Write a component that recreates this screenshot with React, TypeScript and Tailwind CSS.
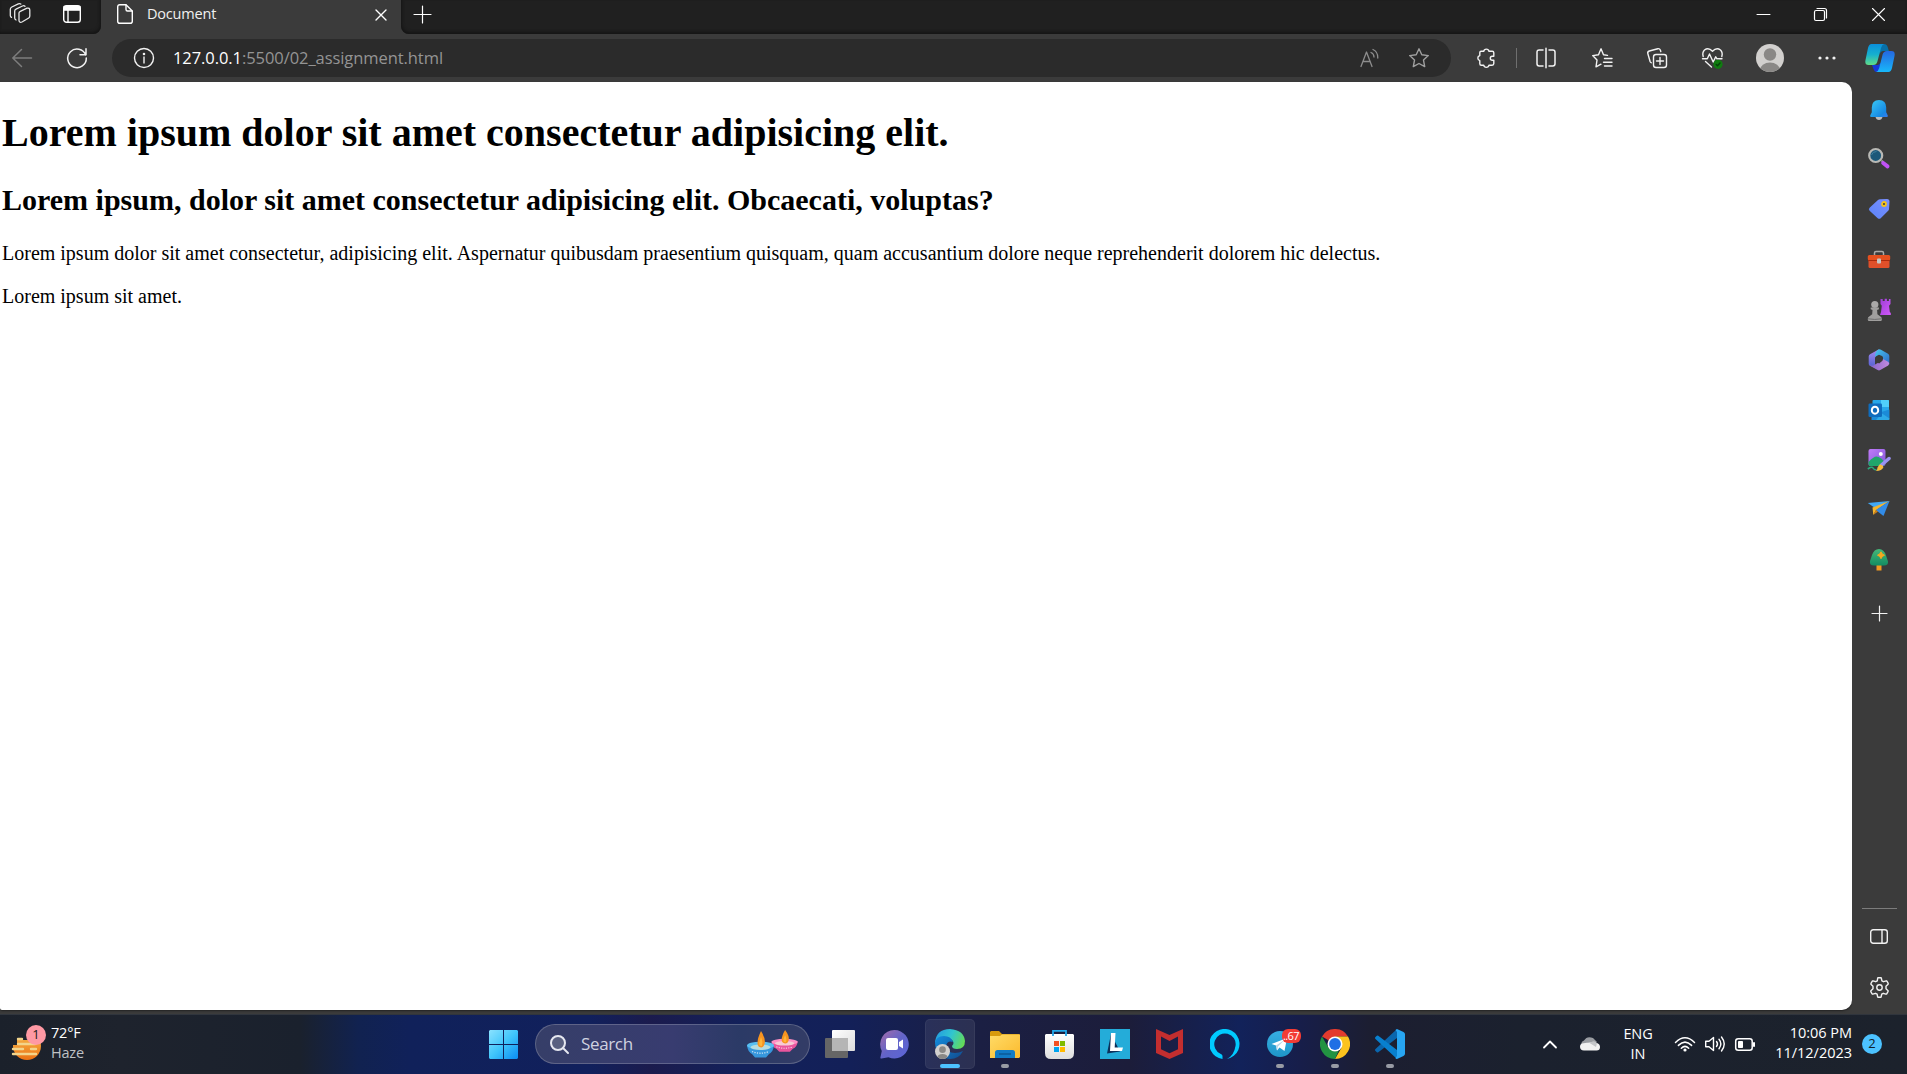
import React from 'react';

type IconProps = { w: number; h: number; className?: string; sw?: number; children: React.ReactNode };

/* Line icon drawn on a one-unit-per-pixel canvas. */
function Icon({ w, h, className = '', sw = 1.35, children }: IconProps) {
  return (
    <svg
      width={w}
      height={h}
      viewBox={`0 0 ${w} ${h}`}
      className={`shrink-0 overflow-visible ${className}`}
      fill="none"
      stroke="currentColor"
      strokeWidth={sw}
      strokeLinecap="round"
      strokeLinejoin="round"
    >
      {children}
    </svg>
  );
}

function Cell({ className, children }: { className: string; children?: React.ReactNode }) {
  return <div className={`flex shrink-0 items-center justify-center ${className}`}>{children}</div>;
}

function TabStrip() {
  return (
    <header className="flex h-[34px] shrink-0 bg-[#3b3b3b] text-white">
      <div className="flex w-[101px] shrink-0 rounded-br-lg bg-[#202020] pb-[6px] shadow-[inset_-1px_-2px_3px_#151515]">
        <Cell className="w-[39px]">
          <Icon w={22} h={22} sw={1.3} className="text-[#e8e8e8]">
            <path d="M11.300 8.300 18 5.200Q20.800 4.500 20.800 7.300V13q0 1.300-1.100 2l-6.300 3.700Q11 20 10.300 18.500 10 18 10 17V10q0-1.200 1.300-1.700Z" />
            <path d="M16 3.300Q15 2.300 13.500 3L7 6.200Q5.700 6.800 5.700 8.200V15q0 1.500 1.300 2" />
            <path d="M11.800 1Q10.800.2 9.300.8L2.800 4Q1.300 4.700 1.300 6.200v6.300q0 1.300 1.200 1.900" />
          </Icon>
        </Cell>
        <Cell className="ml-[12px] w-[42px]">
          <Icon w={18} h={18} sw={1.4}>
            <rect x=".7" y=".7" width="16.600" height="16.600" rx="2.800" />
            <path d="M1 1.500h16v3.600H1Z" fill="currentColor" />
            <path d="M5 5v12" />
          </Icon>
        </Cell>
      </div>
      <div className="flex w-[300px] shrink-0 items-center pb-[6px] pl-[16px]">
        <Icon w={16} h={20} sw={1.4}>
          <path d="M2.800.7H9L15.300 7v10.200q0 2.100-2.100 2.100H2.800Q.7 19.300.7 17.200V2.800Q.7.7 2.800.7Z" />
          <path d="M9 1v4.500Q9 7 10.500 7H15" />
        </Icon>
        <span className="ml-[14px] flex-1 font-['Open_Sans','Noto_Sans',sans-serif] text-[14.500px] leading-5 tracking-[-0.200px] text-[#f0f0f0]">
          Document
        </span>
        <Icon w={10} h={10} sw={1.4} className="mr-[15px] mt-[2px]">
          <path d="m0 0 10 10M10 0 0 10" />
        </Icon>
      </div>
      <div className="flex flex-1 rounded-bl-lg bg-[#202020] pb-[6px] shadow-[inset_1px_-2px_3px_#151515]">
        <Cell className="w-[43px]">
          <Icon w={17} h={17} sw={1.2}>
            <path d="M0 8.500h17M8.500 0v17" />
          </Icon>
        </Cell>
        <div className="flex-1" />
        <Cell className="w-[57px]">
          <Icon w={13} h={11} sw={1}>
            <path d="M0 5.500h13" />
          </Icon>
        </Cell>
        <Cell className="w-[57px]">
          <Icon w={13} h={13} sw={1.2}>
            <rect x=".5" y="2.500" width="10" height="10" rx="1.500" />
            <path d="M3 .5h7.500q2 0 2 2V10" />
          </Icon>
        </Cell>
        <Cell className="w-[58px]">
          <Icon w={13} h={13} sw={1.1}>
            <path d="m.5.5 12 12M12.500.5l-12 12" />
          </Icon>
        </Cell>
      </div>
    </header>
  );
}

function Copilot() {
  return (
    <svg width="30" height="30" viewBox="0 0 30 30" className="shrink-0">
      <defs>
        <linearGradient id="cpA" x1="0" y1="0" x2="0" y2="1">
          <stop offset="0" stopColor="#0a8fdc" />
          <stop offset=".5" stopColor="#16b0cf" />
          <stop offset="1" stopColor="#60dc88" />
        </linearGradient>
        <linearGradient id="cpB" x1="0" y1="0" x2="0" y2="1">
          <stop offset="0" stopColor="#2567e0" />
          <stop offset="1" stopColor="#18b8fa" />
        </linearGradient>
      </defs>
      <path d="M15 1h4q2.800 0 3.700 3l1.200 4h-5.500q-3 0-4 4Z" fill="#0870a8" />
      <path d="M7 22h6l4-3-2 10h-3q-2.500 0-3.300-2.500Z" fill="#1737d8" />
      <path d="M6.500 1H19q-2 .5-3 4l-3.600 13.500Q11.500 22 8 22H3.500Q-.5 22 .5 17L3 5Q4 1 6.500 1Z" fill="url(#cpA)" />
      <path d="M23.500 29H11q2.200-.5 3.200-4l3.400-13.500Q18.600 8 22 8h4.500q4 0 3 5L27 25q-1 4-3.500 4Z" fill="url(#cpB)" />
    </svg>
  );
}

function Person({ size }: { size: number }) {
  return (
    <svg width={size} height={size} viewBox="0 0 28 28" className="shrink-0">
      <defs>
        <clipPath id="face">
          <circle cx="14" cy="14" r="14" />
        </clipPath>
      </defs>
      <g clipPath="url(#face)">
        <path fill="#d2d0ce" d="M0 0h28v28H0Z" />
        <circle cx="14" cy="10.500" r="6.200" fill="#8a8886" />
        <ellipse cx="14" cy="26" rx="10" ry="7.500" fill="#8a8886" />
      </g>
    </svg>
  );
}

function Toolbar() {
  return (
    <div className="flex h-[48px] shrink-0 items-center bg-[#3b3b3b] text-[#f2f2f2]">
      <Cell className="w-[44px] text-[#7d7d7d]">
        <Icon w={20} h={18} sw={1.5}>
          <path d="M9.500.5.800 9l8.700 8.500M1 9h18.500" />
        </Icon>
      </Cell>
      <Cell className="w-[66px]">
        <Icon w={20} h={20} sw={1.5}>
          <path d="M18.700 7A9.300 9.300 0 1 0 19.300 10M19 .8v6h-6" />
        </Icon>
      </Cell>
      <div className="ml-[2px] flex h-[38px] w-[1339px] shrink-0 items-center rounded-full bg-[#2b2b2b]">
        <Cell className="ml-[12px] w-[40px]">
          <Icon w={20} h={20} sw={1.4}>
            <circle cx="10" cy="10" r="9.500" />
            <path d="M10 9v6" />
            <circle cx="10" cy="6" r=".6" fill="currentColor" />
          </Icon>
        </Cell>
        <span className="ml-[9px] flex-1 whitespace-nowrap font-['Open_Sans','Noto_Sans',sans-serif] text-[16.500px] tracking-[-0.070px] text-[#949494]">
          <span className="text-white">127.0.0.1</span>:5500/02_assignment.html
        </span>
        <Cell className="w-[49px] text-[#8d8d8d]">
          <Icon w={20} h={18} sw={1.3}>
            <path d="M1 17.500 6.500 3 12 17.500M3 12.500h7.200M11 3.500q3 1.300 3 4.500M13 .5q5 2.200 4.800 8.500" />
          </Icon>
        </Cell>
        <Cell className="mr-[7px] w-[50px] text-[#a0a0a0]">
          <Icon w={20} h={20} sw={1.4}>
            <path d="m10 .8 2.800 6 6.500.8-4.800 4.500 1.200 6.500-5.700-3.100-5.700 3.100 1.200-6.500L.7 7.600l6.500-.8Z" />
          </Icon>
        </Cell>
      </div>
      <Cell className="ml-[7px] w-[56px]">
        <Icon w={18} h={20} sw={1.4}>
          <path d="M4 3.300h2.700a2.700 2.700 0 0 1 5.300 0h3.300q1.500 0 1.500 1.500v3.400h-1.500a2 2 0 0 0 0 4h1.500v3.300q0 1.700-1.700 1.700H12a2.700 2.700 0 0 1-5.300 0H4.300q-1.500 0-1.500-1.500v-3a2.700 2.700 0 0 1 0-5.200V4.600q0-1.300 1.300-1.300Z" />
        </Icon>
      </Cell>
      <div className="ml-[2px] h-[20px] w-[1px] shrink-0 bg-[#6f6f6f]" />
      <Cell className="w-[58px]">
        <Icon w={20} h={20} sw={1.5}>
          <path d="M7 2H3.200Q1 2 1 4.200v11.600Q1 18 3.200 18H7M13 2h3.800Q19 2 19 4.200v11.600q0 2.200-2.200 2.200H13M10 .3v19.400" />
        </Icon>
      </Cell>
      <Cell className="w-[54px]">
        <Icon w={20} h={20} sw={1.4}>
          <path d="m15.500 7.400-4-.6L9 .8l-2.500 6L.7 7.600 5 12.100l-1 6.700 5-2.600M12.500 10.500H20M11.500 14.300H20M12.500 18H20" />
        </Icon>
      </Cell>
      <Cell className="w-[56px]">
        <Icon w={20} h={20} sw={1.4}>
          <rect x="6.500" y="6.500" width="13" height="13" rx="2.500" />
          <path d="M13 9.500v7M9.500 13h7M13.800 3.500 13.300 2q-.7-1.700-2.500-1.300L2.300 3Q.3 3.700.8 5.500l2.300 8q.4 1 1.100 1.200" />
        </Icon>
      </Cell>
      <Cell className="w-[55px]">
        <Icon w={21} h={20} sw={1.4}>
          <path d="M1.200 8.500Q0 4.500 2.500 2 6.500-1 10.500 3.300 14.500-1 18.500 2q2.500 2.500 1.300 6.500M.5 10.800h4.800L7.500 6l3.700 8 2.500-5.200 1.300 2H20M3.500 13.500 9.500 19" />
          <circle cx="16" cy="16.300" r="4.600" fill="#107c10" stroke="none" />
          <path d="m14.200 16.400 1.300 1.300 2.500-2.600" stroke="#07430a" />
        </Icon>
      </Cell>
      <Cell className="w-[60px]">
        <Person size={28} />
      </Cell>
      <Cell className="w-[54px]">
        <Icon w={18} h={4}>
          <g fill="currentColor" stroke="none">
            <circle cx="2" cy="2" r="1.600" />
            <circle cx="9" cy="2" r="1.600" />
            <circle cx="16" cy="2" r="1.600" />
          </g>
        </Icon>
      </Cell>
      <Cell className="w-[52px]">
        <Copilot />
      </Cell>
    </div>
  );
}

function Art({ w = 24, h = 24, children }: { w?: number; h?: number; children: React.ReactNode }) {
  return (
    <svg width={w} height={h} viewBox={`0 0 ${w} ${h}`} className="shrink-0">
      {children}
    </svg>
  );
}

function Sidebar() {
  return (
    <aside className="flex w-[55px] shrink-0 flex-col items-center bg-[#3b3b3b] pt-[3px] pr-px text-[#f2f2f2]">
      <Cell className="h-[50px]">
        <Art>
          <defs>
            <linearGradient id="bell" x1="0" y1="0" x2="1" y2="1">
              <stop offset="0" stopColor="#3ccbf4" />
              <stop offset=".75" stopColor="#1689e4" />
              <stop offset="1" stopColor="#3a7af0" />
            </linearGradient>
          </defs>
          <path d="M8.500 19h7q-.8 3-3.500 3t-3.500-3Z" fill="#bdbdbd" />
          <path d="M12 2q7.200.3 7.200 7.500v4.800l1.600 3.200q.3 1.500-1 1.500H4.200q-1.300 0-1-1.500l1.600-3.200V9.500Q4.800 2.300 12 2Z" fill="url(#bell)" />
        </Art>
      </Cell>
      <Cell className="h-[48px] pb-[2px]">
        <Art>
          <path d="m14.500 14.500 2 1.800" stroke="#999" strokeWidth="2" />
          <path d="m16.200 17 4.300 3.300" stroke="#c052f5" strokeWidth="4" strokeLinecap="round" />
          <circle cx="8.700" cy="9.500" r="6.500" fill="#1c5879" stroke="#b9b9b5" strokeWidth="2.200" />
          <path d="M4.500 9q1-3.500 5-3.500" stroke="#40809e" fill="none" />
        </Art>
      </Cell>
      <Cell className="h-[52px]">
        <Art>
          <defs>
            <linearGradient id="tag" x1="0" y1="1" x2="1" y2="0">
              <stop offset="0" stopColor="#5b83f8" />
              <stop offset="1" stopColor="#7a90ff" />
            </linearGradient>
          </defs>
          <path d="M13 2.200 20 2q2.500 0 2.500 2.500L22 12q0 1-.8 1.700l-7.500 7.500q-1.400 1.300-3 0L2.600 13.800q-1.500-1.600 0-3L11 3Q11.800 2.200 13 2.200Z" fill="url(#tag)" />
          <circle cx="17" cy="7" r="2" fill="#424242" stroke="#f5c21a" strokeWidth="1.800" />
        </Art>
      </Cell>
      <Cell className="h-[50px]">
        <Art>
          <path d="M7.500 8V5q0-1.500 1.500-1.500h6q1.500 0 1.500 1.500v3" stroke="#aaa9a7" strokeWidth="1.500" fill="none" />
          <rect x="1.500" y="11" width="21" height="9" rx="1.500" fill="#e0502a" />
          <rect x=".8" y="7" width="22.400" height="5.500" rx="1.500" fill="#e5501f" />
          <path d="M1 12.500h22" stroke="#a92b0d" />
          <rect x="10" y="10.500" width="4" height="5" rx="1" fill="#c5c5c3" />
        </Art>
      </Cell>
      <Cell className="h-[50px] pb-px">
        <Art>
          <defs>
            <linearGradient id="rook" x1="0" y1="0" x2="1" y2="1">
              <stop offset="0" stopColor="#9d3fd6" />
              <stop offset="1" stopColor="#d158fa" />
            </linearGradient>
          </defs>
          <path d="M13.500 1h2.200v2h2V.8h2.200V3h2V1h1.600v5l-1.500 1.800.8 6.200 1 1v2H13l1-3 .8-6.200L13.500 6Z" fill="url(#rook)" />
          <circle cx="7.800" cy="6.500" r="3.600" fill="#aaa9a8" />
          <path d="M3.700 9.500h8.200v1.700l-1.800.7.300 4.300 4 3q1.300 3.700-.8 3.800H2Q0 22.500 1.200 19.200l4-3 .3-4.300-1.800-.7Z" fill="#a09f9e" />
          <path d="M1 20.800q6.500 1.300 13.500 0" stroke="#6f6f6f" fill="none" />
        </Art>
      </Cell>
      <Cell className="h-[50px] pb-px">
        <Art>
          <defs>
            <linearGradient id="mA" x1="0" y1="0" x2="0" y2="1">
              <stop offset="0" stopColor="#a78af0" />
              <stop offset="1" stopColor="#4f5fd0" />
            </linearGradient>
            <linearGradient id="mB" x1="0" y1="0" x2="1" y2="1">
              <stop offset="0" stopColor="#45c8ee" />
              <stop offset="1" stopColor="#3068c8" />
            </linearGradient>
            <linearGradient id="mC" x1="0" y1="0" x2="1" y2="0">
              <stop offset="0" stopColor="#8563c8" />
              <stop offset="1" stopColor="#c28ae0" />
            </linearGradient>
          </defs>
          <path d="M12 1.200 3 6.300Q1.700 7 1.700 8.600v7.200q0 1 .9 1.600L8 20v-9.700q0-1.600 1.300-2.300Z" fill="url(#mA)" />
          <path d="M11 1.700q1.500-.8 3 0l7 4q1.300.8 1.300 2.300v8.500L16 13V9.500q0-1-1-1.500l-3-1.200-4 2Q8 4 11 1.700Z" fill="url(#mB)" />
          <path d="M2 16.800q3.500 2.200 6-.3l7.300-4 .7-1.500 5.500 3q1.700 1.700-.3 3.500L13.300 22q-1.300.8-2.700 0L3 17.800Z" fill="url(#mC)" />
          <path d="m8.700 9.200 3.500-1.700 3.200 2v3.300l-3.300 2.700-3.400-2.300Z" fill="#3b3b3b" />
        </Art>
      </Cell>
      <Cell className="h-[50px]">
        <Art>
          <rect x="5.500" y="2" width="16.500" height="15" rx="1" fill="#28a8ea" />
          <path d="M14 2h7q1 0 1 1v6h-8Z" fill="#50d0fa" />
          <path d="M5.500 9H14v6H5.500Z" fill="#0964b3" />
          <path d="M22.500 11.500V21q0 1-1 1h-17v-5Z" fill="#1b8bd8" />
          <path d="m15 15.500 7.500 5V21q0 1-1 1H9Z" fill="#3ac0f2" opacity=".6" />
          <rect x="1.500" y="5.500" width="13.500" height="13.500" rx="1.300" fill="#0f6cbd" />
          <ellipse cx="8" cy="12.200" rx="3.200" ry="3.500" stroke="white" strokeWidth="2" fill="none" />
        </Art>
      </Cell>
      <Cell className="h-[49px]">
        <Art>
          <defs>
            <linearGradient id="pic" x1="0" y1="0" x2="1" y2="1">
              <stop offset="0" stopColor="#c07bf8" />
              <stop offset="1" stopColor="#8357dc" />
            </linearGradient>
          </defs>
          <rect x="1.500" y="1" width="17" height="17" rx="2" fill="url(#pic)" />
          <path d="M1.500 14q5-5.500 8-5.500 4 0 9 6.500l-2 3H3.500q-2 0-2-2Z" fill="#21a56b" />
          <circle cx="13.800" cy="6" r="2" fill="white" />
          <path d="M0 20.500h5V18H0Z" fill="#3b3b3b" />
          <path d="M.8 21q4.200-3 5.200-1t3.500 2" stroke="#2ba979" strokeWidth="1.600" fill="none" />
          <path d="m14.500 17 7.500-6.500" stroke="#9a91f2" strokeWidth="3.500" strokeLinecap="round" />
          <path d="M12.500 16.500q3-.5 4 2.500-1.500 4-7.500 4 1.500-1.500 1.500-3.500Z" fill="#f7bb3c" />
        </Art>
      </Cell>
      <Cell className="h-[50px]">
        <Art>
          <path d="m.8 6 21.700-2L9.500 12Z" fill="#41a8f5" />
          <path d="M22.500 4 5.500 10.500 6.300 18l2.500-4.500Z" fill="#f5b52c" />
          <path d="M22.500 4 8.800 13l7.700 6Z" fill="#328ce8" />
          <path d="m8.800 13-2.500 5 4.700-3.400Z" fill="#cd801b" />
        </Art>
      </Cell>
      <Cell className="h-[52px]">
        <Art>
          <defs>
            <linearGradient id="tree" x1="0" y1="0" x2="0" y2="1">
              <stop offset="0" stopColor="#45b878" />
              <stop offset="1" stopColor="#138c62" />
            </linearGradient>
          </defs>
          <path d="M9.500 16h5v6.500h-5Z" fill="#f39a20" />
          <path d="M12 1q5 0 7 6.500l2 6q.5 4-4 4H7q-4.700 0-4-4.500l2-6Q7 1 12 1Z" fill="url(#tree)" />
          <path d="M14 3.800 15.300 6l2.200 1.200-2.200 1.200L14 10.700l-1.300-2.300-2.200-1.200L12.700 6Z" fill="#f7a820" stroke="#f7a820" strokeLinejoin="round" />
        </Art>
      </Cell>
      <Cell className="h-[54px]">
        <Icon w={15} h={15} sw={1.2}>
          <path d="M0 7.500h15M7.500 0v15" />
        </Icon>
      </Cell>
      <div className="mt-auto h-px w-[35px] bg-[#7c7c7c]" />
      <Cell className="h-[55px]">
        <Icon w={18} h={15} sw={1.4}>
          <rect x=".7" y=".7" width="16.600" height="13.600" rx="2.500" />
          <path d="M12 1v13" />
        </Icon>
      </Cell>
      <Cell className="mb-[4px] h-[46px]">
        <Icon w={21} h={21} sw={1.400}>
          <path d="m8.700 1 .7-.3h2.200l.7.300.6 2.800 1.600.9 2.700-.9.700.4 1.300 2.100-.1.900-2.100 2v2.600l2.100 2-.1.900-1.300 2.100-.7.400-2.700-.9-1.600.9-.6 2.800-.7.300H9.400l-.7-.3-.6-2.800-1.600-.9-2.700.9-.7-.4-1.300-2.100.1-.9 2.100-2V9.200l-2.100-2 .1-.9 1.300-2.100.7-.4 2.700.9 1.600-.9Z" />
          <circle cx="10.500" cy="10.500" r="2.700" />
        </Icon>
      </Cell>
    </aside>
  );
}

function Document() {
  return (
    <main className="h-[927.500px] flex-1 overflow-hidden rounded-r-[10px] rounded-bl-[2px] bg-white pl-[2px] font-['Liberation_Serif','Times_New_Roman',serif] text-black shadow-[0_1px_2px_#222]">
      <h1 className="mt-[28px] text-[40px] leading-[46px] font-bold">
        Lorem ipsum dolor sit amet consectetur adipisicing elit.
      </h1>
      <h2 className="mt-[27px] text-[30px] leading-[34px] font-bold">
        Lorem ipsum, dolor sit amet consectetur adipisicing elit. Obcaecati, voluptas?
      </h2>
      <p className="mt-[25px] text-[20px] leading-[23px]">
        Lorem ipsum dolor sit amet consectetur, adipisicing elit. Aspernatur quibusdam praesentium quisquam, quam
        accusantium dolore neque reprehenderit dolorem hic delectus.
      </p>
      <p className="mt-[20px] text-[20px] leading-[23px]">Lorem ipsum sit amet.</p>
    </main>
  );
}

function Diya({ x, y, bowl, rim, inner }: { x: number; y: number; bowl: string; rim: string; inner: string }) {
  return (
    <g transform={`translate(${x} ${y})`}>
      <path d="M0 14q.5 6.500 5 9l3 3.500h11l3-3.500q4.500-2.500 5-9Z" fill={bowl} />
      <ellipse cx="13.500" cy="14.500" rx="13.500" ry="3.800" fill={rim} />
      <ellipse cx="13.500" cy="16.200" rx="10" ry="2.800" fill={inner} />
      <path d="M5 20.500q8.500 3.500 17 0" stroke="white" strokeOpacity=".75" strokeWidth="1.300" strokeDasharray="1.200 1.300" fill="none" />
      <path d="M14 0q4.800 7.500 3.700 12.500-1 4.200-3.700 4-3.500-.5-3.500-4.500Q10.500 7 14 0Z" fill="#f79420" />
      <path d="M14 6q2.200 5 .8 9-2.600.5-2.600-3Z" fill="#ffb63a" />
    </g>
  );
}

function AppCell({ running, children }: { running?: boolean; children: React.ReactNode }) {
  return (
    <div className="relative flex h-[50px] w-[55px] shrink-0 items-center justify-center">
      {children}
      {running && <div className="absolute bottom-[1px] h-[4px] w-[8px] rounded-full bg-[#989ba4]" />}
    </div>
  );
}

function Taskbar() {
  return (
    <footer className="flex h-[60px] shrink-0 items-center border-t border-[#30353d] bg-[linear-gradient(90deg,#1b212b_0,#1e232d_120px,#1a212d_300px,#112250_358px,#10215a_410px,#11205c_590px,#1b1b4d_650px,#13215a_740px,#132058_850px,#1b1f43_980px,#1c1d3a_1130px,#12225a_1240px,#171e4a_1300px,#1c1e31_1370px,#1b212e_1520px,#1c222c_100%)] pb-px font-['Open_Sans','Noto_Sans',sans-serif] text-white">
      <div className="flex w-[476px] shrink-0 items-center pl-[11px]">
        <div className="relative h-[38px] w-[36px]">
          <svg width="32" height="38" viewBox="0 0 32 38">
            <defs>
              <linearGradient id="sun" x1="0" y1="0" x2="0" y2="1">
                <stop offset="0" stopColor="#f8bd50" />
                <stop offset="1" stopColor="#eb7112" />
              </linearGradient>
            </defs>
            <circle cx="16" cy="21" r="14" fill="url(#sun)" />
            <path d="M0 5h18v10H0ZM0 15h6v5H0Z" fill="#1c222c" />
            <path d="M7 14h4M7 19h17M2 24h10M20 24h5M2 29h23" stroke="#f2d48b" strokeWidth="2.400" strokeLinecap="round" />
          </svg>
          <div className="absolute top-0 left-[15px] flex size-[20px] items-center justify-center rounded-full bg-[#ff99a4] text-[13px] text-[#202020]">
            1
          </div>
        </div>
        <div className="ml-[4px] pb-[2px] text-[14.500px] leading-[20px] tracking-[-0.200px]">
          <div>72°F</div>
          <div className="text-[#bfc1c4]">Haze</div>
        </div>
      </div>
      <AppCell>
        <svg width="29" height="29" viewBox="0 0 29 29">
          <defs>
            <linearGradient id="win" x1="0" y1="0" x2="1" y2="1">
              <stop offset="0" stopColor="#8be2ff" />
              <stop offset=".5" stopColor="#40c5fb" />
              <stop offset="1" stopColor="#0a8cf4" />
            </linearGradient>
          </defs>
          <path d="M1 0h13v14H0V1ZM15 0h13l1 1v13H15ZM0 15h14v14H1l-1-1ZM15 15h14v13l-1 1H15Z" fill="url(#win)" />
        </svg>
      </AppCell>
      <div className="ml-[4px] flex h-[40px] w-[275px] shrink-0 items-center rounded-full border border-white/20 bg-[linear-gradient(90deg,#363e68,#383c70_50%,#2b3a66_75%,#333c66)] pl-[14px]">
        <Icon w={19} h={19} sw={2} className="text-[#e6e8f0]">
          <circle cx="8" cy="8" r="7" fill="#596080" />
          <path d="m13 13 5 5" />
        </Icon>
        <span className="ml-[12px] flex-1 text-[17px] tracking-[-0.350px] text-[#cfd2e0]">Search</span>
        <svg width="51" height="28" viewBox="0 0 51 28" className="mr-[11px]">
          <g transform="translate(24.500 0) scale(.97 .82)">
            <Diya x={0} y={0} bowl="#e9559d" rim="#ff8fc4" inner="#f7cbd5" />
          </g>
          <Diya x={0} y={1} bowl="#3696dc" rim="#58bff2" inner="#b7dcdf" />
        </svg>
      </div>
      <div className="ml-[2px] flex shrink-0">
        <AppCell>
          <svg width="30" height="28" viewBox="0 0 30 28">
            <defs>
              <linearGradient id="tv" x1="0" y1="0" x2="1" y2="1">
                <stop offset="0" stopColor="#fff" />
                <stop offset="1" stopColor="#dcdcdc" />
              </linearGradient>
            </defs>
            <rect y="8" width="23" height="20" rx="1" fill="#666" />
            <rect x="7" width="23" height="21" rx="1" fill="url(#tv)" />
            <path d="M7 8h16v13H7Z" fill="#b5b5b5" />
          </svg>
        </AppCell>
        <AppCell>
          <svg width="29" height="29" viewBox="0 0 29 29">
            <defs>
              <linearGradient id="chat" x1="0" y1="0" x2="1" y2="1">
                <stop offset="0" stopColor="#a66ca8" />
                <stop offset=".5" stopColor="#6264c8" />
                <stop offset="1" stopColor="#5b65d8" />
              </linearGradient>
            </defs>
            <path d="M14.500 0a14.300 14.300 0 1 1-6 27.300L1.500 28.500Q0 28.500.5 27l1.300-6A14.300 14.300 0 0 1 14.500 0Z" fill="url(#chat)" />
            <rect x="6" y="8" width="12" height="12" rx="2" fill="#fff" />
            <path d="m19 12 4-2.500v9L19 16Z" fill="#fff" />
          </svg>
        </AppCell>
        <div className="relative mx-[2.500px] flex size-[50px] shrink-0 items-center justify-center rounded-[5px] border border-white/5 bg-white/8">
          <svg width="30" height="30" viewBox="0 0 30 30">
            <defs>
              <linearGradient id="eA" x1="0" y1=".3" x2="1" y2=".6">
                <stop offset="0" stopColor="#249de0" />
                <stop offset=".5" stopColor="#31c5cf" />
                <stop offset="1" stopColor="#65db55" />
              </linearGradient>
              <linearGradient id="eB" x1="0" y1="0" x2="1" y2="1">
                <stop offset="0" stopColor="#138ee0" />
                <stop offset="1" stopColor="#114a8d" />
              </linearGradient>
            </defs>
            <path d="M0 14Q1 0 15 0q14 1 15 12 0 8-8 8-5-.2-5-3 3-3 0-6Q9 4 0 14Z" fill="url(#eA)" />
            <path d="M0 14Q1 7 9 7q7 0 9 6-5-2-6.500 2.500Q11 24 20 24q4 0 8-2-4 8-13 8Q1 29 0 14Z" fill="url(#eB)" />
          </svg>
          <div className="absolute bottom-[9px] left-[9px]">
            <Person size={15} />
          </div>
          <div className="absolute bottom-0 h-[4px] w-[20px] rounded-full bg-[#4cc2ff]" />
        </div>
        <AppCell running>
          <svg width="30" height="27" viewBox="0 0 30 27">
            <defs>
              <linearGradient id="fold" x1="0" y1="0" x2="1" y2="1">
                <stop offset="0" stopColor="#ffdb67" />
                <stop offset="1" stopColor="#fbba2d" />
              </linearGradient>
            </defs>
            <path d="M1 0h8l3 3h17l1 1v7H0V1Z" fill="#d89a0d" />
            <path d="M0 5h10l2-1.500h18V26l-1 1H0Z" fill="url(#fold)" />
            <path d="M5 27v-5.500Q5 19 7.500 19h15q2.500 0 2.500 2.500V27Z" fill="#117bc6" />
            <path d="M9 23h12" stroke="#0a5590" strokeWidth="1.300" />
          </svg>
        </AppCell>
        <AppCell>
          <svg width="29" height="29" viewBox="0 0 29 29">
            <defs>
              <linearGradient id="bag" x1="0" y1="0" x2="0" y2="1">
                <stop offset="0" stopColor="#fff" />
                <stop offset="1" stopColor="#dedede" />
              </linearGradient>
            </defs>
            <path d="M1 4h27l1 1v18q0 6-6 6H6q-6 0-6-6V5Z" fill="url(#bag)" />
            <path d="M8 6V.8h13V6" stroke="#22a9ec" strokeWidth="1.800" fill="none" />
            <path d="M9 11h5v5H9Z" fill="#f25022" />
            <path d="M15 11h5v5h-5Z" fill="#7fba00" />
            <path d="M9 17h5v5H9Z" fill="#00a4ef" />
            <path d="M15 17h5v5h-5Z" fill="#ffb900" />
          </svg>
        </AppCell>
        <AppCell>
          <svg width="30" height="30" viewBox="0 0 30 30">
            <path d="M0 0h30v30H0Z" fill="#24acd9" />
            <path d="m11 5-4 19.500 13-2Z" fill="#0c315a" />
            <path d="M11 4h4.500l-.8 14.500h8.300l-1 3.500H10Z" fill="#fff" />
          </svg>
        </AppCell>
        <AppCell>
          <svg width="27" height="30" viewBox="0 0 27 30">
            <path d="m0 0 13.500 6L27 0v24l-13.500 6L0 24ZM5 7.500v12.700l8.500 4 8.500-4V7.500L13.500 12Z" fill="#c32e2f" fillRule="evenodd" />
          </svg>
        </AppCell>
        <AppCell>
          <svg width="30" height="30" viewBox="0 0 30 30">
            <path d="M12.500 30A15.100 15.100 0 1 1 17 29.900Q24 26.500 25.500 17A10.700 10.700 0 1 0 10.800 25q1.700.7 1.700 2Z" fill="#00caff" />
          </svg>
        </AppCell>
        <AppCell running>
          <svg width="26" height="26" viewBox="0 0 26 26">
            <defs>
              <linearGradient id="tg" x1="0" y1="0" x2="0" y2="1">
                <stop offset="0" stopColor="#37aee2" />
                <stop offset="1" stopColor="#1e96c8" />
              </linearGradient>
            </defs>
            <circle cx="13" cy="13" r="13" fill="url(#tg)" />
            <path d="M4.500 13 20 7l-2.500 13-5-3.500-2.500 3-1-5Z" fill="#fff" />
            <path d="m9 14.500 8.500-5.500-6.500 6.500-1 4Z" fill="#b9d6e8" />
          </svg>
          <div className="absolute top-[10px] left-[29.500px] flex h-[14px] w-[19px] items-center justify-center rounded-[6px] bg-[#f23c34] text-[11px] tracking-[-0.600px]">
            ..67
          </div>
        </AppCell>
        <AppCell running>
          <svg width="30" height="30" viewBox="0 0 30 30">
            <path d="M15 15 2 7.500A15 15 0 0 1 28 7.500H15Z" fill="#e33b2e" />
            <path d="M15 7.500h13A15 15 0 0 1 15 30l6.500-11.200Z" fill="#fcc31e" />
            <path d="M2 7.500 8.500 18.800 15 22.500l3.700-.9L15 30A15 15 0 0 1 2 7.500Z" fill="#229342" />
            <circle cx="15" cy="15" r="7.500" fill="#fff" />
            <circle cx="15" cy="15" r="5.900" fill="#1f6fe5" />
          </svg>
        </AppCell>
        <AppCell running>
          <svg width="30" height="30" viewBox="0 0 30 30">
            <path d="M22 0v9L3.300 23.300q-.8.500-1.500 0L.5 22q-1-1 0-2Z" fill="#0a66ad" />
            <path d="M22 30v-9L3.300 6.700q-.8-.5-1.500 0L.5 8q-1 1 0 2Z" fill="#0880cf" />
            <path d="m22 0 6.500 3Q30 3.800 30 5.300v19.400q0 1.500-1.500 2.300L22 30q-1.500 0-1.500-1L22 27V3l-1.500-2Z" fill="#27a5f2" />
          </svg>
        </AppCell>
      </div>
      <div className="ml-auto flex shrink-0 items-center pr-[25px]">
        <Cell className="w-[40px]">
          <Icon w={12} h={7} sw={1.800}>
            <path d="m0 6.500 6-6 6 6" />
          </Icon>
        </Cell>
        <Cell className="w-[40px]">
          <svg width="20" height="14" viewBox="0 0 20 14">
            <path d="M2 9Q0 5 4 3.500 7-1.500 13 1l4 4-8 6Z" fill="#9a9da2" />
            <path d="M4 13.500q-4-.4-4-3.800Q0 6.500 3.500 6.300L7 5.800q6-.5 7 .7l3-.5q3 1 3 4 0 3.500-3.500 3.500Z" fill="#f2f2f2" />
            <path d="M3 6.500 8 5l8 5 1-4q-3-3-5.500-1L8 5Z" fill="#c4c6c9" />
          </svg>
        </Cell>
        <Cell className="w-[56px] pb-[1px] text-center text-[14.500px] leading-[20px] tracking-[-0.100px]">
          <div>
            <div>ENG</div>
            <div>IN</div>
          </div>
        </Cell>
        <Cell className="ml-[4px] w-[30px]">
          <Icon w={20} h={15} sw={1.500}>
            <path d="M.5 5.500Q10-4 19.500 5.500M3.400 8.400q6.600-6.600 13.200 0M6.300 11.200q3.700-3.700 7.400 0" />
            <circle cx="10" cy="13" r="1.600" fill="currentColor" stroke="none" />
          </Icon>
        </Cell>
        <Cell className="w-[30px]">
          <Icon w={20} h={16} sw={1.400}>
            <path d="M.7 5.200H4L8.500 1.500v13L4 10.800H.7ZM11.500 5.500q2 2.500 0 5M14 3.300q3.700 4.700 0 9.400M16.500 1q5.500 7 0 14" />
          </Icon>
        </Cell>
        <Cell className="w-[30px]">
          <Icon w={20} h={13} sw={1.500}>
            <rect x=".7" y=".7" width="16.500" height="11.600" rx="2.500" />
            <rect x="3" y="3" width="5" height="7" rx=".8" fill="currentColor" stroke="none" />
            <path d="M19 5v3" strokeWidth="2" />
          </Icon>
        </Cell>
        <div className="w-[92px] pb-[2px] text-right text-[14.500px] leading-[20px] tracking-[-0.020px]">
          <div>10:06 PM</div>
          <div>11/12/2023</div>
        </div>
        <div className="ml-[10px] flex size-[20px] items-center justify-center rounded-full bg-[#4cc2ff] text-[13px] text-[#10202c]">
          2
        </div>
      </div>
    </footer>
  );
}

export default function App() {
  return (
    <div className="flex h-[1074px] w-[1907px] flex-col overflow-hidden bg-[#3b3b3b]">
      <TabStrip />
      <Toolbar />
      <div className="flex h-[932px] shrink-0">
        <Document />
        <Sidebar />
      </div>
      <Taskbar />
    </div>
  );
}
